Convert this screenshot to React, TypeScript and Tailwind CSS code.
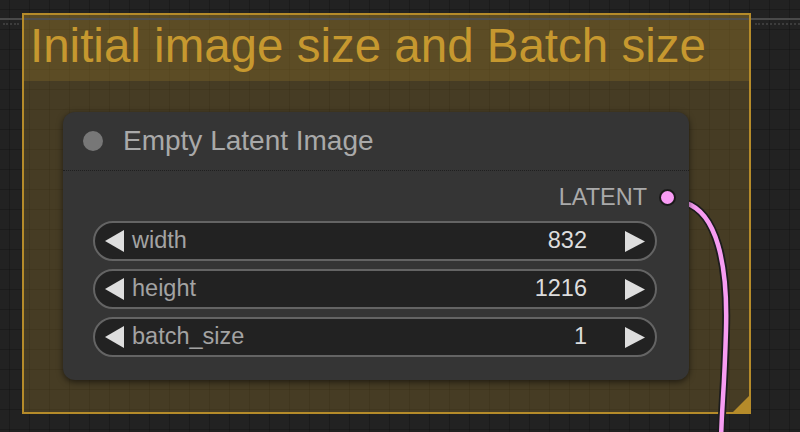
import React from "react";

const LeftTri = () => (
  <svg width="19" height="22" viewBox="0 0 19 22" className="shrink-0">
    <polygon points="19,0 19,22 0,11" fill="#dedede" />
  </svg>
);
const RightTri = () => (
  <svg width="20" height="21" viewBox="0 0 20 21" className="shrink-0">
    <polygon points="0,0 0,21 20,10.5" fill="#dedede" />
  </svg>
);

function Widget({ label, value }: { label: string; value: string }) {
  return (
    <div className="flex items-center h-[40px] rounded-full border-2 border-[#646464] bg-[#222222] pl-[10px] pr-[10px]">
      <LeftTri />
      <span className="ml-[8px] text-[23.5px] text-[#a3a3a3] leading-none">{label}</span>
      <span className="ml-auto mr-[38px] text-[23.5px] text-[#dddddd] leading-none">{value}</span>
      <RightTri />
    </div>
  );
}

export default function App() {
  return (
    <div
      className="relative w-[800px] h-[432px] overflow-hidden bg-[#222222] [background-image:linear-gradient(to_right,rgba(0,0,0,0.2)_1px,transparent_1px),linear-gradient(to_bottom,rgba(0,0,0,0.2)_1px,transparent_1px)] [background-size:20px_20px] [background-position:9px_9px]"
      style={{ fontFamily: '"Liberation Sans", Arial, sans-serif' }}
    >
      {/* top strip line */}
      <div className="absolute left-0 top-[18px] w-[800px] h-[2px] bg-[#4a4a4a]" />
      <div className="absolute left-[3px] top-[23px] w-[16px] border-t-2 border-dotted border-[#3c3c3c]" />
      <div className="absolute left-[755px] top-[23px] w-[45px] border-t-2 border-dotted border-[#3c3c3c]" />

      {/* group */}
      <div className="absolute left-[22px] top-[13px] w-[729px] h-[401px] border-2 border-[#b58b2a] flex flex-col">
        <div className="relative h-[66px] bg-[rgba(181,139,42,0.4)] pl-[6px] pt-[7px]">
          <div className="absolute left-0 top-[3px] w-full h-[2px] bg-[#4f4f4f]" />
          <div className="text-[47.5px] leading-[48px] text-[#c6982f] whitespace-nowrap">
            Initial image size and Batch size
          </div>
        </div>
        <div className="relative flex-1 bg-[rgba(181,139,42,0.25)]">
          <svg width="16" height="16" viewBox="0 0 16 16" className="absolute right-0 bottom-0">
            <polygon points="16,0 16,16 0,16" fill="#b58b2a" />
          </svg>
        </div>
      </div>

      {/* link */}
      <svg width="800" height="432" className="absolute left-0 top-0 pointer-events-none">
        <path
          d="M686 203 C 716 213, 728 262, 726 330 S 722 400, 721 440"
          fill="none"
          stroke="#1c1c1c"
          strokeWidth="8"
        />
        <path
          d="M686 203 C 716 213, 728 262, 726 330 S 722 400, 721 440"
          fill="none"
          stroke="#f79cf2"
          strokeWidth="4.5"
        />
      </svg>

      {/* node */}
      <div className="absolute left-[63px] top-[112px] w-[626px] h-[268px] rounded-[12px] bg-[#353535] shadow-[0_2px_6px_rgba(0,0,0,0.55)] flex flex-col">
        <div className="h-[59px] flex items-center pl-[20px] border-b border-dotted border-[#1f1f1f]">
          <div className="w-[20px] h-[20px] rounded-full bg-[#777777]" />
          <span className="ml-[20px] text-[28px] text-[#a9a9a9] leading-none">Empty Latent Image</span>
        </div>
        <div className="flex flex-col pl-[30px] pr-[32px]">
          <div className="h-[50px] flex items-center justify-end mr-[-19px] pt-[3px]">
            <span className="text-[23.5px] text-[#aaaaaa] leading-none">LATENT</span>
            <div className="ml-[12px] w-[17px] h-[17px] rounded-full bg-[#f99cf5] border-2 border-[#1a1a1a]" />
          </div>
          <div className="flex flex-col gap-[8px]">
            <Widget label="width" value="832" />
            <Widget label="height" value="1216" />
            <Widget label="batch_size" value="1" />
          </div>
        </div>
      </div>
    </div>
  );
}
